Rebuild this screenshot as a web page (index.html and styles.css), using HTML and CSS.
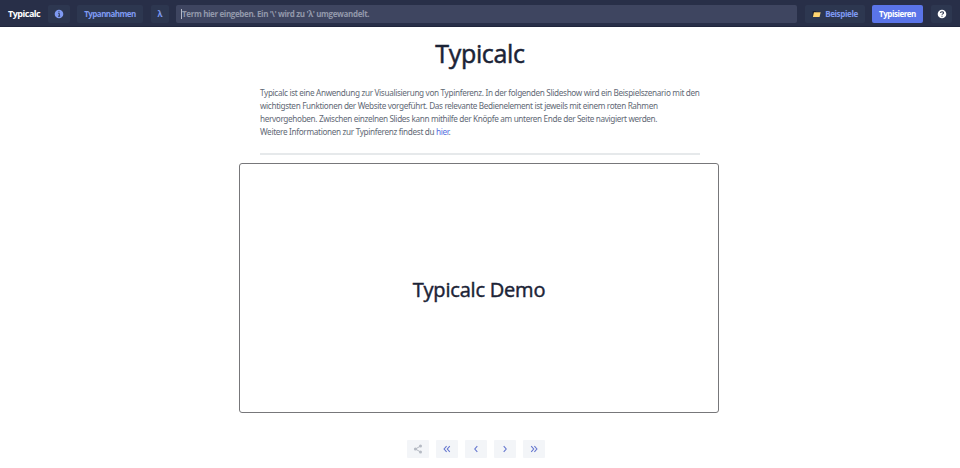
FILE: index.html
```
<!DOCTYPE html>
<html lang="de">
<head>
<meta charset="utf-8">
<title>Typicalc</title>
<link rel="stylesheet" href="styles.css">
</head>
<body>
<header class="bar">
  <span class="brand">Typicalc</span>
  <button class="btn info" aria-label="Info"><svg width="10" height="10" viewBox="0 0 10 10"><circle cx="5" cy="5" r="4.3" fill="#7f9af2"/><path d="M4.3 4.4h1v2.8M4 7.2h2.2M4.4 2.8h1.1" stroke="#2d3750" stroke-width="1" fill="none"/></svg></button>
  <button class="btn types"><span>Typannahmen</span></button>
  <button class="btn lambda">λ</button>
  <div class="field"><i class="caret"></i><span>Term hier eingeben. Ein '\' wird zu 'λ' umgewandelt.</span></div>
  <button class="btn examples"><svg width="9" height="8" viewBox="0 0 9 8"><path d="M.7 1.2h2.8l.8.5h3.4V7H.7z" fill="#141722"/><path d="M1.9 2.3h6.7L7.6 6.9H.9z" fill="#ffd572"/></svg><span>Beispiele</span></button>
  <button class="btn primary"><span>Typisieren</span></button>
  <button class="btn help" aria-label="Hilfe"><svg width="10" height="10" viewBox="0 0 10 10"><circle cx="5" cy="5" r="4.3" fill="#fff"/><path d="M3.5 4C3.5 2.3 6.5 2.3 6.5 3.9C6.5 4.9 5 4.8 5 5.8M5 6.8v1" stroke="#2d3750" stroke-width="1.1" fill="none"/></svg></button>
</header>
<main>
  <h1><span>Typicalc</span></h1>
  <p class="intro">
    <span class="l1">Typicalc ist eine Anwendung zur Visualisierung von Typinferenz. In der folgenden Slideshow wird ein Beispielszenario mit den</span>
    <span class="l2">wichtigsten Funktionen der Website vorgeführt. Das relevante Bedienelement ist jeweils mit einem roten Rahmen</span>
    <span class="l3">hervorgehoben. Zwischen einzelnen Slides kann mithilfe der Knöpfe am unteren Ende der Seite navigiert werden.</span>
    <span class="l4">Weitere Informationen zur Typinferenz findest du <a>hier</a>.</span>
  </p>
  <div class="rule"></div>
  <section class="slide"><h2>Typicalc Demo</h2></section>
  <nav class="controls">
    <button class="share" aria-label="Teilen"><svg width="10" height="10" viewBox="0 0 10 10"><path d="M7.5 2L2.5 5L7.5 8"/><g fill="#b5bac3"><circle cx="7.5" cy="2" r="1.5"/><circle cx="2.4" cy="5" r="1.5"/><circle cx="7.5" cy="8" r="1.5"/></g></svg></button>
    <button aria-label="Anfang"><svg width="10" height="10" viewBox="0 0 10 10"><path d="M4.6 2.2L2.1 5L4.6 7.8M7.8 2.2L5.3 5L7.8 7.8"/></svg></button>
    <button aria-label="Zurück"><svg width="10" height="10" viewBox="0 0 10 10"><path d="M6.3 2.2L3.8 5L6.3 7.8"/></svg></button>
    <button aria-label="Weiter"><svg width="10" height="10" viewBox="0 0 10 10"><path d="M3.7 2.2L6.2 5L3.7 7.8"/></svg></button>
    <button aria-label="Ende"><svg width="10" height="10" viewBox="0 0 10 10"><path d="M2.2 2.2L4.7 5L2.2 7.8M5.4 2.2L7.9 5L5.4 7.8"/></svg></button>
  </nav>
</main>
</body>
</html>
```
FILE: styles.css
```
* { box-sizing: border-box; }
body {
  margin: 0;
  height: 468px;
  overflow: hidden;
  background: #fff;
  color: #1b2336;
  font-family: "Open Sans", "Noto Sans", sans-serif;
}
button { border: 0; padding: 0; font: inherit; letter-spacing: inherit; display: flex; align-items: center; justify-content: center; }
svg { display: block; flex: none; }
.bar {
  display: flex;
  align-items: center;
  height: 27px;
  padding: 1px 8px 0;
  background: #282f48;
  border-bottom: 1px solid #20263d;
  font-size: 8px;
  font-weight: 600;
  white-space: nowrap;
}
.brand { width: 40px; color: #fff; font-size: 9px; font-weight: 700; letter-spacing: -.5px; }
.btn { height: 18px; border-radius: 2px; background: #2d3750; color: #7f9af2; flex: none; }
.info { width: 22px; }
.types { width: 66px; margin-left: 7px; font-weight: 700; letter-spacing: -.55px; }
.lambda { width: 18px; margin-left: 8px; font-weight: 700; }
.field {
  display: flex;
  align-items: center;
  flex: 1;
  height: 18px;
  margin-left: 7px;
  padding-left: 5px;
  border-radius: 2px;
  background: #3e4560;
  color: #9298aa;
  font-weight: 700;
  letter-spacing: -.36px;
}
.caret { width: 1px; height: 10px; background: #b4b9c8; }
.examples { width: 60px; margin-left: 8px; gap: 4px; font-weight: 700; letter-spacing: -.36px; }
.primary { width: 51px; margin-left: 7px; background: #5a74e8; color: #fff; font-weight: 700; letter-spacing: -.46px; }
.help { width: 21px; margin-left: 8px; }
main { display: flex; flex-direction: column; align-items: center; }
h1 { margin: 8px 0 0; height: 36px; line-height: 36px; font-size: 25px; font-weight: 400; letter-spacing: -.35px; -webkit-text-stroke: .5px currentColor; }
h2 { margin: 0; font-size: 20px; line-height: 28px; font-weight: 400; letter-spacing: -.2px; white-space: nowrap; -webkit-text-stroke: .45px currentColor; }
.intro { width: 440px; margin: 15px 0 0; font-family: "Noto Sans", "Open Sans", sans-serif; font-size: 8.2px; line-height: 13px; letter-spacing: -.335px; color: #626975; }
.intro > span { display: block; white-space: nowrap; }
.intro .l2 { letter-spacing: -.35px; }
.intro .l3 { letter-spacing: -.35px; }
.intro .l4 { letter-spacing: -.33px; }
.intro a { color: #526de0; }
.rule { width: 440px; height: 2px; margin-top: 15px; background: #e6e9eb; }
.slide {
  display: flex;
  align-items: center;
  justify-content: center;
  width: 480px;
  height: 250px;
  margin: 8px 2px 0 0;
  padding-top: 4px;
  border: 1px solid #77777a;
  border-radius: 3px;
}
.controls { display: flex; gap: 7px; margin: 27px 8px 0 0; }
.controls button { width: 22px; height: 18px; border-radius: 1px; background: #f3f5f8; }
.controls path { fill: none; stroke: #6576cf; stroke-width: 1.1; }
.controls .share path { stroke: #b5bac3; stroke-width: 1; }
```
